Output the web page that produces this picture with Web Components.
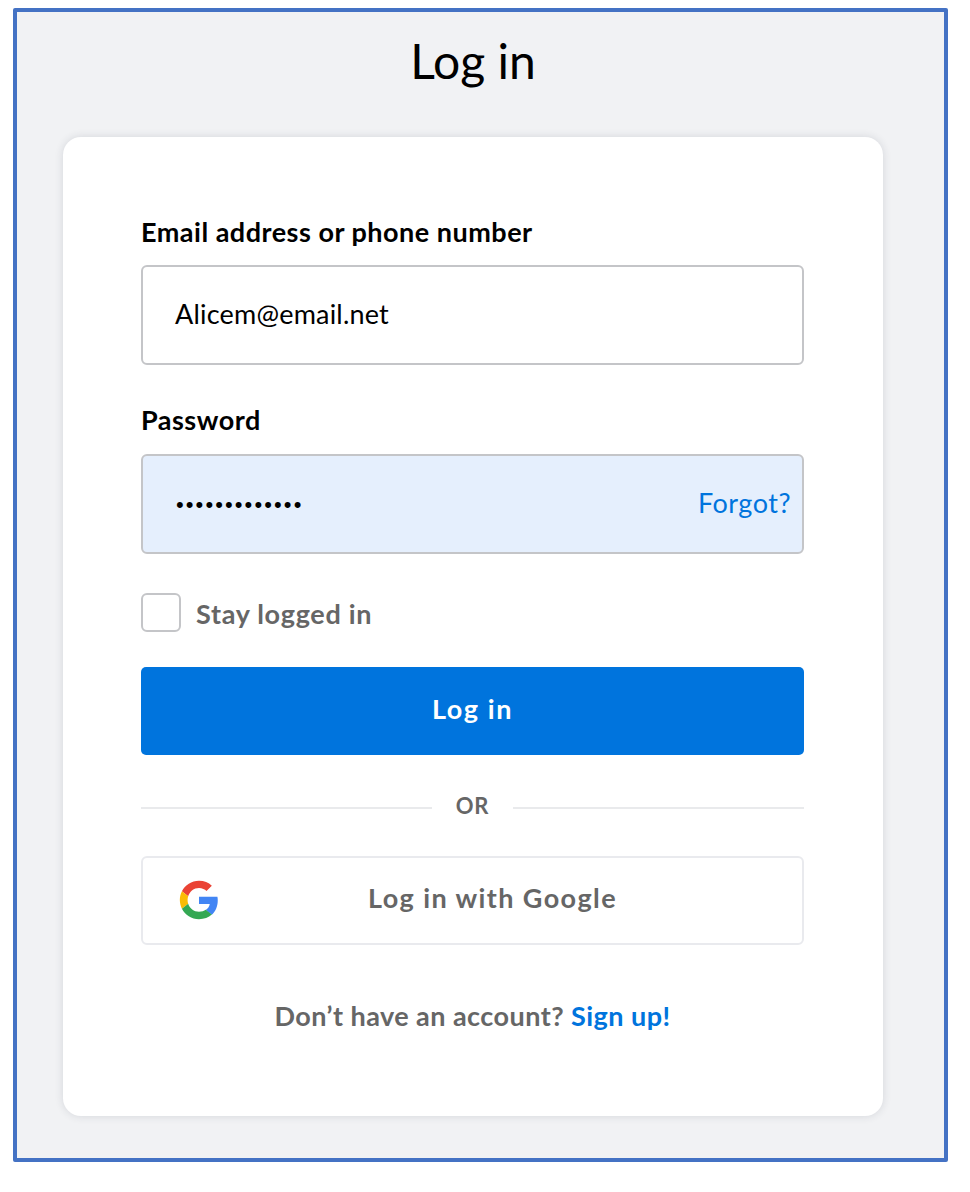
<!DOCTYPE html>
<html lang="en"><head><meta charset="utf-8"><title>Log in</title>
<style>
html,body{margin:0;padding:0;background:#fff}
body{font-family:Lato,"Liberation Sans",sans-serif;color:#000}
</style></head><body>
<login-frame>
  <span slot="title">Log in</span>
  <login-card>
    <text-field label="Email address or phone number" value="Alicem@email.net"></text-field>
    <text-field label="Password" value="•••••••••••••" filled forgot style="margin-top:39px"></text-field>
    <check-row style="margin-top:39px">Stay logged in</check-row>
    <primary-button style="margin-top:35px">Log in</primary-button>
    <or-divider style="margin-top:38px"></or-divider>
    <google-button style="margin-top:39px">Log in with Google</google-button>
    <signup-line style="margin-top:55px"></signup-line>
  </login-card>
</login-frame>
<script>
function def(name, html, init){
  customElements.define(name, class extends HTMLElement{
    constructor(){super();this.attachShadow({mode:'open'}).innerHTML=html;}
    connectedCallback(){ if(init) init(this,this.shadowRoot); }
  });
}
def('login-frame',`<style>
:host{display:block;box-sizing:border-box;width:935px;height:1154px;margin:8px 0 0 13px;border:4px solid #4472c4;border-radius:2px;background:#f1f2f4;padding:21px 61px 0 46px}
.t{font-size:48px;line-height:56px;text-align:center;font-weight:400;color:#000;margin:0 0 48px}
</style><div class="t"><slot name="title"></slot></div><slot></slot>`);
def('login-card',`<style>
:host{display:block;box-sizing:border-box;width:820px;height:979px;background:#fff;border-radius:18px;box-shadow:0 0 8px rgba(40,50,70,.14);padding:79px 79px 0 78px}
</style><slot></slot>`);
def('text-field',`<style>
:host{display:block}
.l{font-size:27px;letter-spacing:.5px;line-height:32px;font-weight:700;color:#000;margin-bottom:17px;height:32px}
:host([forgot]) .l{margin-bottom:18px}
.b{box-sizing:border-box;height:100px;border:2px solid #c4c5c8;border-radius:6px;background:#fff;display:flex;align-items:center;justify-content:space-between;padding:0 11px 4px 32px;font-size:27px;letter-spacing:.2px;color:#000}
:host([filled]) .b{background:#e5effd}
.f{color:#0074dd;font-size:27px;letter-spacing:.5px;display:none}
:host([forgot]) .f{display:block}
:host([forgot]) .v{font-size:22px;letter-spacing:2.1px;padding:5px 0 0 1px;font-family:"Liberation Sans",sans-serif}
</style><div class="l"></div><div class="b"><span class="v"></span><span class="f">Forgot?</span></div>`,
(h,s)=>{s.querySelector('.l').textContent=h.getAttribute('label');s.querySelector('.v').textContent=h.getAttribute('value');});
def('check-row',`<style>
:host{display:flex;align-items:center;gap:15px;font-size:27px;letter-spacing:.7px;font-weight:700;color:#666}
i{display:block;box-sizing:border-box;width:40px;height:39px;border:2px solid #c4c5c8;border-radius:6px;background:#fff}
span{padding-top:2px}
</style><i></i><span><slot></slot></span>`);
def('primary-button',`<style>
:host{display:flex;align-items:center;justify-content:center;box-sizing:border-box;padding-bottom:6px;height:88px;background:#0074dd;border-radius:5px;color:#fff;font-size:27px;font-weight:700;letter-spacing:1.6px}
</style><slot></slot>`);
def('or-divider',`<style>
:host{display:flex;align-items:center;gap:24px;height:24px;font-size:22px;font-weight:700;color:#666;letter-spacing:.8px}
b{flex:1;height:2px;background:#e9eaec;margin-top:5px}
</style><b></b><span>OR</span><b></b>`);
def('google-button',`<style>
:host{display:flex;align-items:center;box-sizing:border-box;height:89px;border:2px solid #e9eaee;border-radius:6px;background:#fff;padding:0 0 0 36px;font-size:27px;font-weight:700;color:#666;letter-spacing:1.4px}
svg{width:40px;height:40px;flex:none;margin-bottom:2px}
span{flex:1;text-align:center;padding-right:36px;padding-bottom:6px}
</style><svg viewBox="0 0 48 48" aria-hidden="true">
<path fill="#ea4335" d="M24 9.500c3.900 0 6.900 1.600 9 3.600l6.400-6.300C35.400 3.100 30.200 1 24 1 15 1 7.300 6.200 3.500 13.600l7.500 5.800C12.800 13.500 17.900 9.500 24 9.500z"/>
<path fill="#4285f4" d="M46.500 24.500c0-1.700-.1-3-.4-4.500H24v8.700h12.900c-.5 2.900-2.200 5.500-4.800 7.200l7.300 5.700c4.300-4 7.100-9.800 7.100-17.100z"/>
<path fill="#fbbc05" d="M11 28.600c-.5-1.400-.7-3-.7-4.600s.3-3.200.7-4.600l-7.500-5.800C2 16.700 1 20.200 1 24s1 7.300 2.500 10.400z"/>
<path fill="#34a853" d="M24 47c6.200 0 11.400-2 15.400-5.500l-7.300-5.700c-2 1.400-4.700 2.400-8.100 2.400-6.100 0-11.200-4-13-9.600l-7.500 5.800C7.300 41.800 15 47 24 47z"/>
</svg><span><slot></slot></span>`);
def('signup-line',`<style>
:host{display:block;text-align:center;font-size:27px;letter-spacing:.45px;font-weight:700;color:#666;line-height:32px}
a{color:#0074dd;text-decoration:none}
</style>Don’t have an account? <a href="#">Sign up!</a>`);
</script>
</body></html>
